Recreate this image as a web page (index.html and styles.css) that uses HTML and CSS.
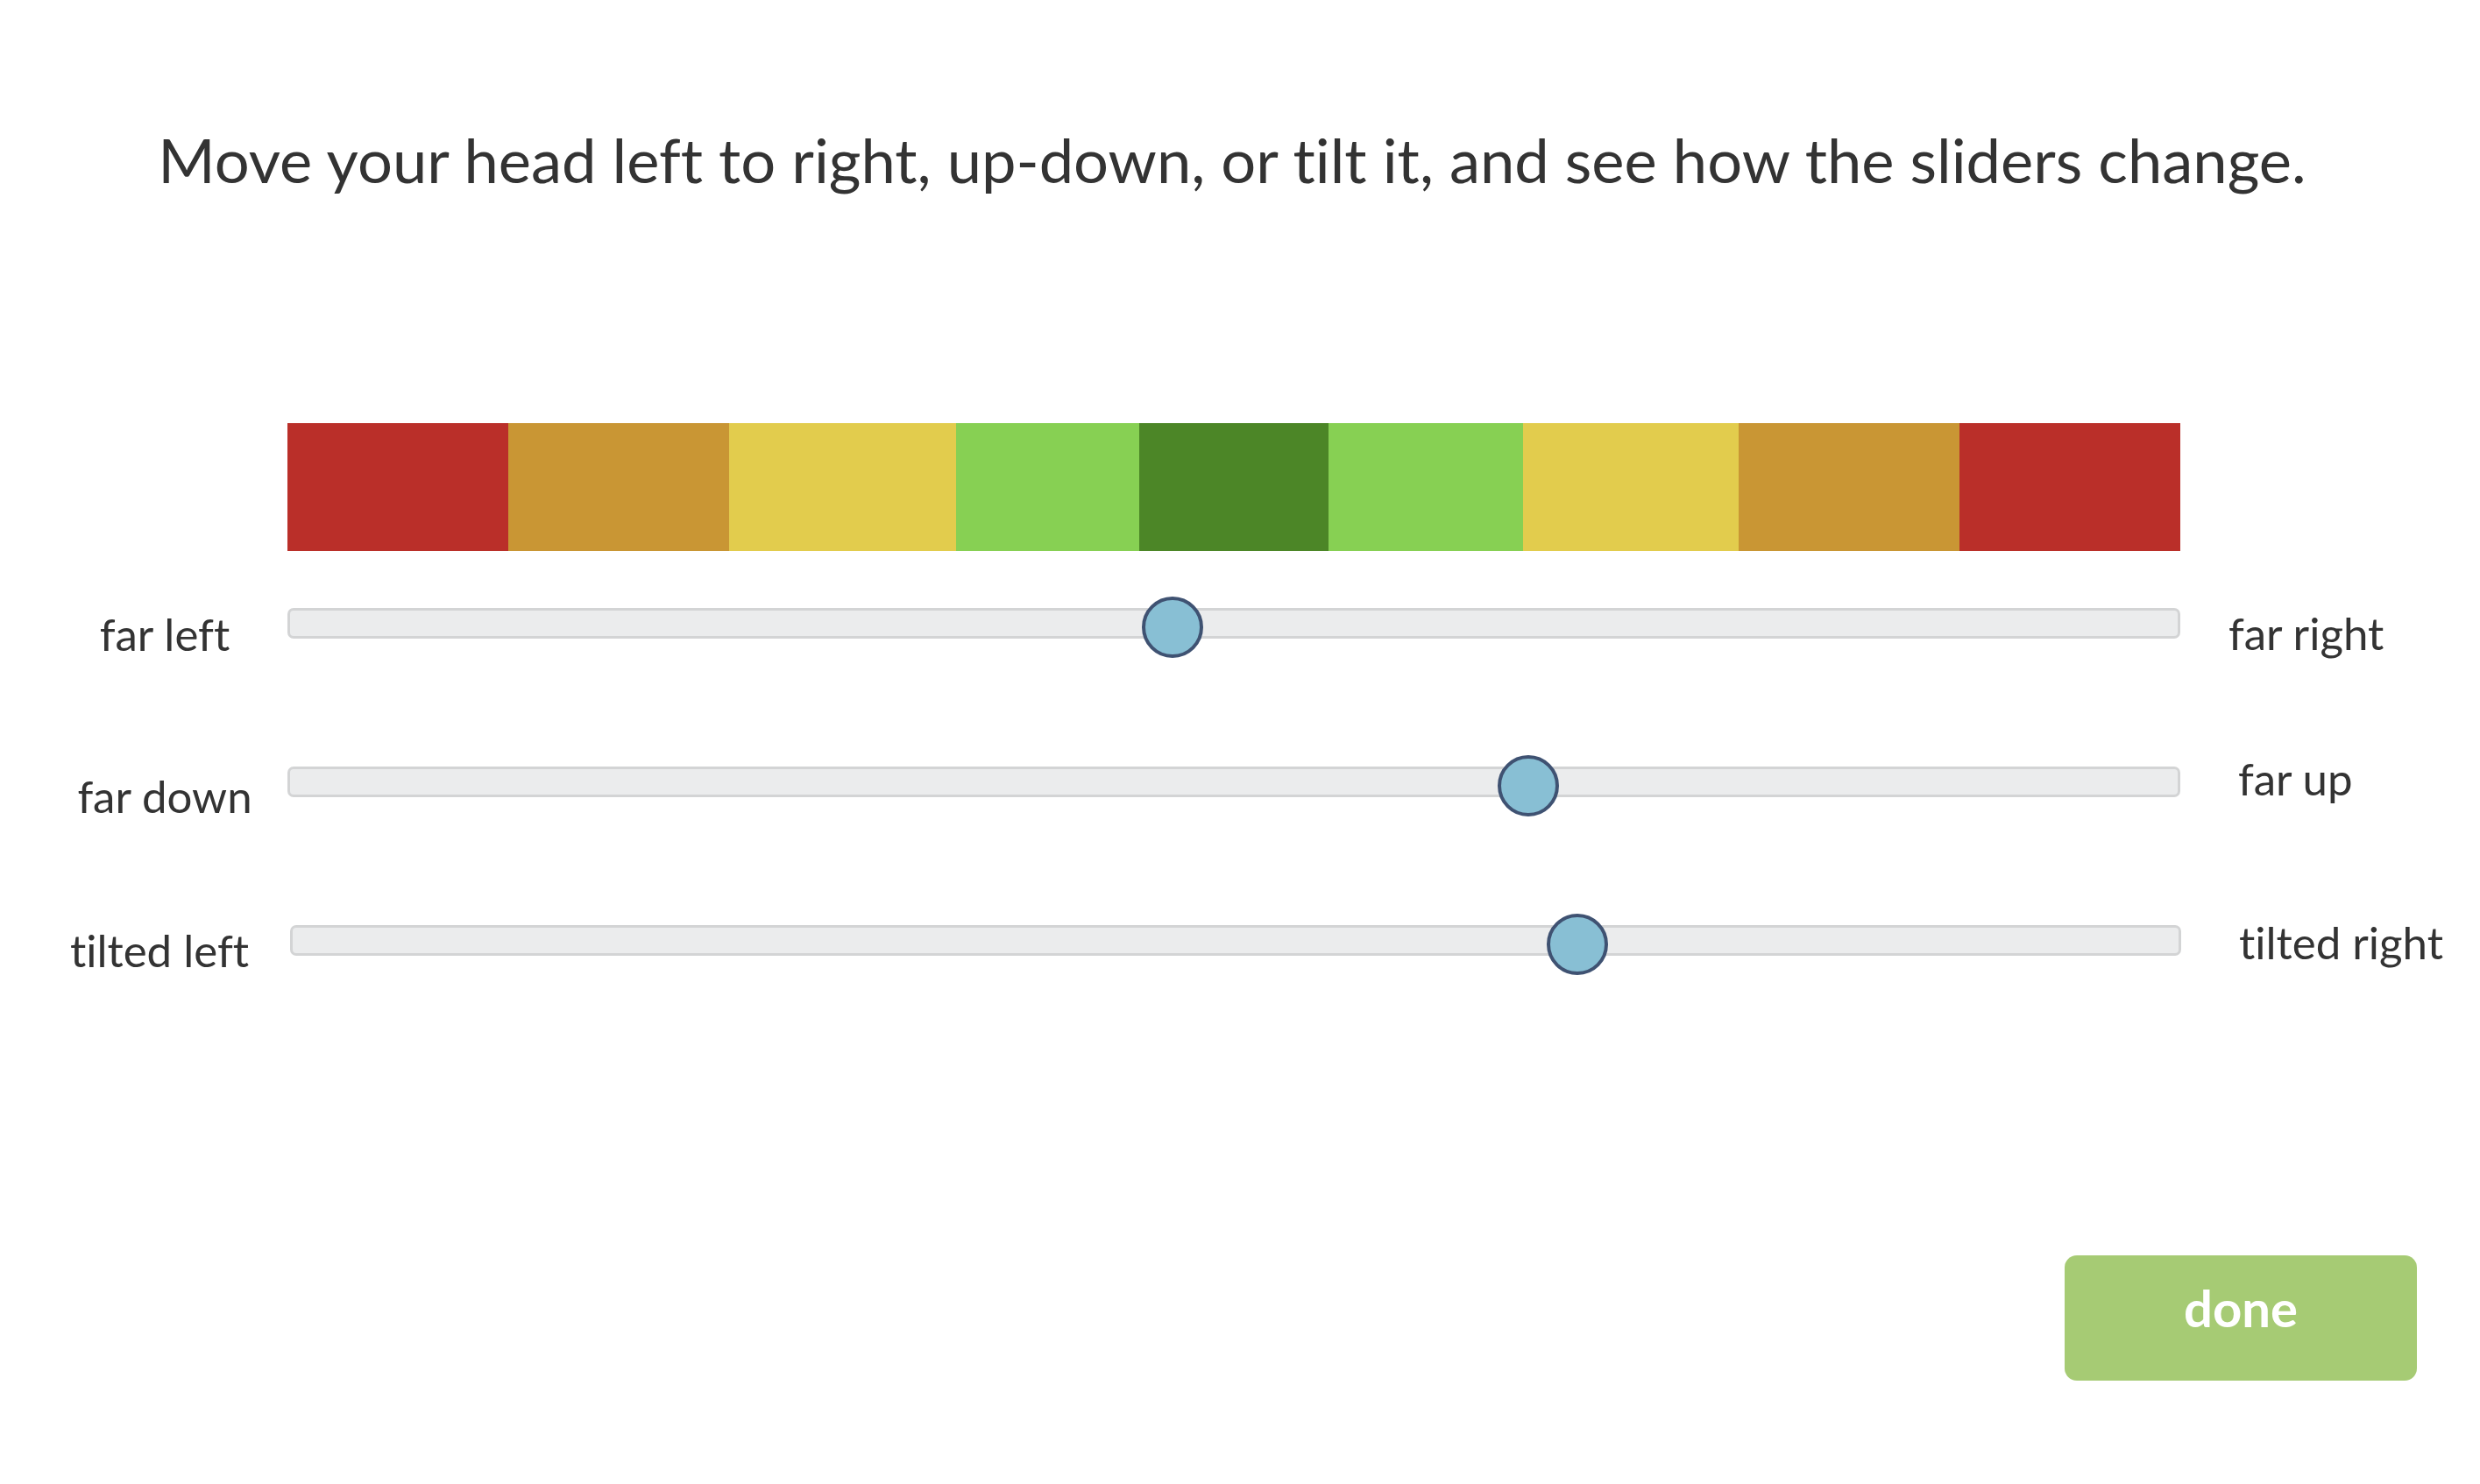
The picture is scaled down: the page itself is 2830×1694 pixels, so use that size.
FILE: index.html
```html
<!DOCTYPE html>
<html lang="en">
<head>
<meta charset="utf-8">
<title>Head pose calibration</title>
<link rel="stylesheet" href="styles.css">
</head>
<body>
<main class="page">
  <h1 class="prompt">Move your head left to right, up-down, or tilt it, and see how the sliders change.</h1>

  <div class="scale">
    <div class="seg red"></div>
    <div class="seg orange"></div>
    <div class="seg yellow"></div>
    <div class="seg lime"></div>
    <div class="seg green"></div>
    <div class="seg lime"></div>
    <div class="seg yellow"></div>
    <div class="seg orange"></div>
    <div class="seg red"></div>
  </div>

  <div class="sliders">
    <div class="row">
      <span class="label left l-far-left">far left</span>
      <div class="track"><span class="thumb" style="left: 46.75%"></span></div>
      <span class="label right r-far-right">far right</span>
    </div>
    <div class="row">
      <span class="label left l-far-down">far down</span>
      <div class="track"><span class="thumb" style="left: 65.6%"></span></div>
      <span class="label right r-far-up">far up</span>
    </div>
    <div class="row">
      <span class="label left l-tilted-left">tilted left</span>
      <div class="track track-shift"><span class="thumb" style="left: 68.1%"></span></div>
      <span class="label right r-tilted-right">tilted right</span>
    </div>
  </div>

  <div class="actions">
    <button class="done" type="button">done</button>
  </div>
</main>
</body>
</html>
```

FILE: styles.css
```css
* {
  box-sizing: border-box;
}

html, body {
  margin: 0;
  padding: 0;
  background: #ffffff;
}

body {
  font-family: Lato, "Open Sans", "Liberation Sans", sans-serif;
  font-variant-ligatures: none;
  color: #333333;
}

.page {
  width: 2830px;
  height: 1694px;
  padding-top: 140px;
  overflow: hidden;
}

.prompt {
  margin: 0;
  padding-right: 18px;
  font-size: 70.5px;
  font-weight: 400;
  line-height: 1.2;
  text-align: center;
  color: #333333;
}

.scale {
  margin: 258px 0 0 328px;
  width: 2160px;
  height: 146px;
  display: grid;
  grid-template-columns: 252px 252px 259px 209px 216px 222px 246px 252px 252px;
}

.seg.red { background: #ba2f29; }
.seg.orange { background: #c99634; }
.seg.yellow { background: #e2cc4d; }
.seg.lime { background: #87d053; }
.seg.green { background: #4c8627; }

.sliders {
  margin-top: 65px;
  display: flex;
  flex-direction: column;
}

.row {
  height: 181px;
  display: grid;
  grid-template-columns: 328px 2160px 1fr;
  align-items: start;
}

.label {
  font-size: 51px;
  line-height: 1.2;
  white-space: nowrap;
}

.label.left {
  padding-left: 44px;
  text-align: center;
}

.label.right {
  padding-left: 55px;
}

.l-far-left { margin-top: -1px; padding-left: 48px !important; }
.l-far-down { margin-top: 3px; padding-left: 48px !important; }
.l-tilted-left { margin-top: -2px; padding-left: 36px !important; }

.r-far-right { margin-top: -2px; }
.r-far-up { margin-top: -17px; padding-left: 66px !important; }
.r-tilted-right { margin-top: -11px; padding-left: 67px !important; }

.track {
  position: relative;
  height: 35px;
  background: #ebeced;
  border: 3px solid #d3d4d5;
  border-radius: 7px;
}

.track-shift {
  margin-left: 3px;
  margin-right: -1px;
}

.thumb {
  position: absolute;
  top: -16px;
  width: 70px;
  height: 70px;
  transform: translateX(-50%);
  border-radius: 50%;
  background: #88bfd4;
  border: 4px solid #3f5272;
}

.actions {
  margin-top: 196px;
  display: flex;
  justify-content: flex-end;
  padding-right: 72px;
}

.done {
  width: 402px;
  height: 143px;
  border: none;
  border-radius: 14px;
  background: #a6cb74;
  color: #ffffff;
  font-family: Lato, "Open Sans", "Liberation Sans", sans-serif;
  font-variant-ligatures: none;
  font-weight: 700;
  font-size: 58px;
  line-height: 1.2;
  padding: 0 0 22px 0;
  cursor: pointer;
}
```
